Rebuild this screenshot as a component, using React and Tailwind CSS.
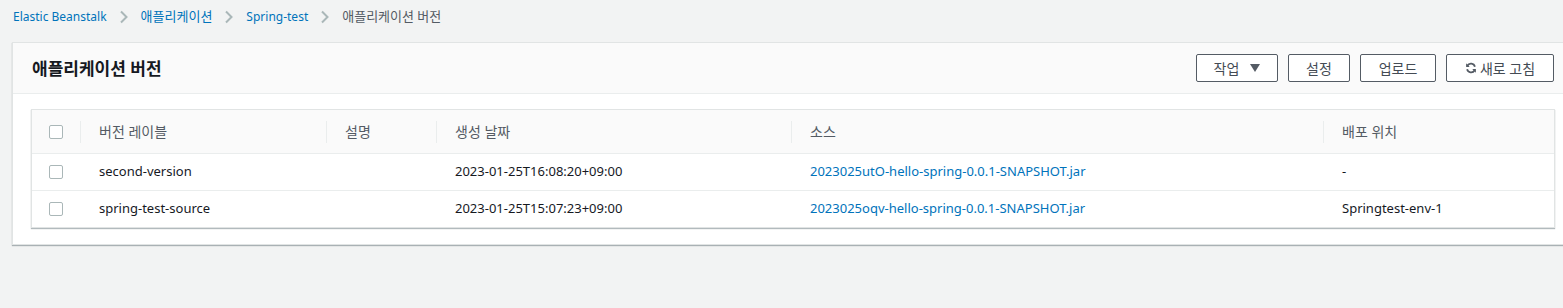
import React from 'react';

const FONT = '"Noto Sans", "Noto Sans CJK KR", sans-serif';

function Chevron() {
    return (
        <svg width="10" height="14" viewBox="0 0 10 14" className="mx-[12px]">
            <path d="M2 1.5 L7.5 7 L2 12.5" fill="none" stroke="#aab7b8" strokeWidth="2" />
        </svg>
    );
}

function Checkbox() {
    return <div className="w-[14px] h-[14px] border border-[#aab7b8] rounded-[2px] bg-white"></div>;
}

function RefreshIcon() {
    return (
        <svg width="12" height="12" viewBox="0 0 16 16" className="mr-[3px]">
            <path d="M13.2 6.2A5.5 5.5 0 0 0 3.1 5" fill="none" stroke="#545b64" strokeWidth="2.4" />
            <path d="M1.5 1.8 L1.5 6.6 L6.3 6.6 Z" fill="#545b64" />
            <path d="M2.8 9.8A5.5 5.5 0 0 0 12.9 11" fill="none" stroke="#545b64" strokeWidth="2.4" />
            <path d="M14.5 14.2 L14.5 9.4 L9.7 9.4 Z" fill="#545b64" />
        </svg>
    );
}

const cols = [
    { label: '버전 레이블', w: 'w-[246px]' },
    { label: '설명', w: 'w-[110px]' },
    { label: '생성 날짜', w: 'w-[355px]' },
    { label: '소스', w: 'w-[532px]' },
    { label: '배포 위치', w: 'flex-1' },
];

const rows = [
    { label: 'second-version', desc: '', date: '2023-01-25T16:08:20+09:00', source: '2023025utO-hello-spring-0.0.1-SNAPSHOT.jar', env: '-' },
    { label: 'spring-test-source', desc: '', date: '2023-01-25T15:07:23+09:00', source: '2023025oqv-hello-spring-0.0.1-SNAPSHOT.jar', env: 'Springtest-env-1' },
];

export default function App() {
    return (
        <div className="w-[1563px] h-[308px] overflow-hidden bg-[#f2f3f3] text-[#16191f]" style={{ fontFamily: FONT }}>
            <nav className="flex items-center h-[35px] pl-[13px] text-[13px] pb-[1px]">
                <span className="text-[#0073bb] text-[12px]">Elastic Beanstalk</span>
                <Chevron />
                <span className="text-[#0073bb]">애플리케이션</span>
                <Chevron />
                <span className="text-[#0073bb] text-[12px]">Spring-test</span>
                <Chevron />
                <span className="text-[#545b64]">애플리케이션 버전</span>
            </nav>

            <div className="ml-[12px] mt-[7px] w-[1562px] bg-white border border-[#e1e4e4] shadow-[0_1px_1px_0_rgba(0,28,36,0.3)]">
                <div className="flex items-center justify-between h-[51px] px-[19px] bg-[#fafafa] border-b border-[#eaeded]">
                    <h2 className="text-[17px] font-bold leading-none">애플리케이션 버전</h2>
                    <div className="flex items-center gap-[10px] text-[14px] text-[#444b54]">
                        <button className="flex items-center justify-center w-[82px] h-[28px] border border-[#545b64] rounded-[2px] bg-white">
                            작업
                            <svg width="10" height="8" viewBox="0 0 10 8" className="ml-[11px]">
                                <path d="M0 0 H10 L5 8 Z" fill="#545b64" />
                            </svg>
                        </button>
                        <button className="w-[62px] h-[28px] border border-[#545b64] rounded-[2px] bg-white">설정</button>
                        <button className="w-[76px] h-[28px] border border-[#545b64] rounded-[2px] bg-white">업로드</button>
                        <button className="flex items-center justify-center w-[108px] h-[28px] border border-[#545b64] rounded-[2px] bg-white">
                            <RefreshIcon />
                            새로 고침
                        </button>
                    </div>
                </div>

                <div className="px-[18px] pt-[15px] pb-[16px]">
                    <div className="border border-[#e1e4e4] shadow-[0_1px_1px_0_rgba(0,28,36,0.3)] text-[13px]">
                        <div className="flex items-center h-[44px] bg-[#fafafa] border-b border-[#eaeded] text-[#545b64] text-[14px]">
                            <div className="flex items-center justify-between w-[49px] pl-[17px]">
                                <Checkbox />
                                <div className="w-px h-[22px] bg-[#eaeded]"></div>
                            </div>
                            {cols.map((c, i) => (
                                <div key={c.label} className={`flex items-center justify-between ${c.w} pl-[18px]`}>
                                    <span>{c.label}</span>
                                    {i < cols.length - 1 && <div className="w-px h-[22px] bg-[#eaeded]"></div>}
                                </div>
                            ))}
                        </div>
                        {rows.map((r, i) => (
                            <div key={r.label} className={`flex items-center ${i < rows.length - 1 ? 'h-[37px] border-b border-[#eaeded]' : 'h-[36px]'}`}>
                                <div className="w-[49px] pl-[17px]"><Checkbox /></div>
                                <div className="w-[246px] pl-[18px]">{r.label}</div>
                                <div className="w-[110px] pl-[18px]">{r.desc}</div>
                                <div className="w-[355px] pl-[18px]">{r.date}</div>
                                <div className="w-[532px] pl-[18px] text-[#0073bb]">{r.source}</div>
                                <div className="flex-1 pl-[18px]">{r.env}</div>
                            </div>
                        ))}
                    </div>
                </div>
            </div>
        </div>
    );
}
